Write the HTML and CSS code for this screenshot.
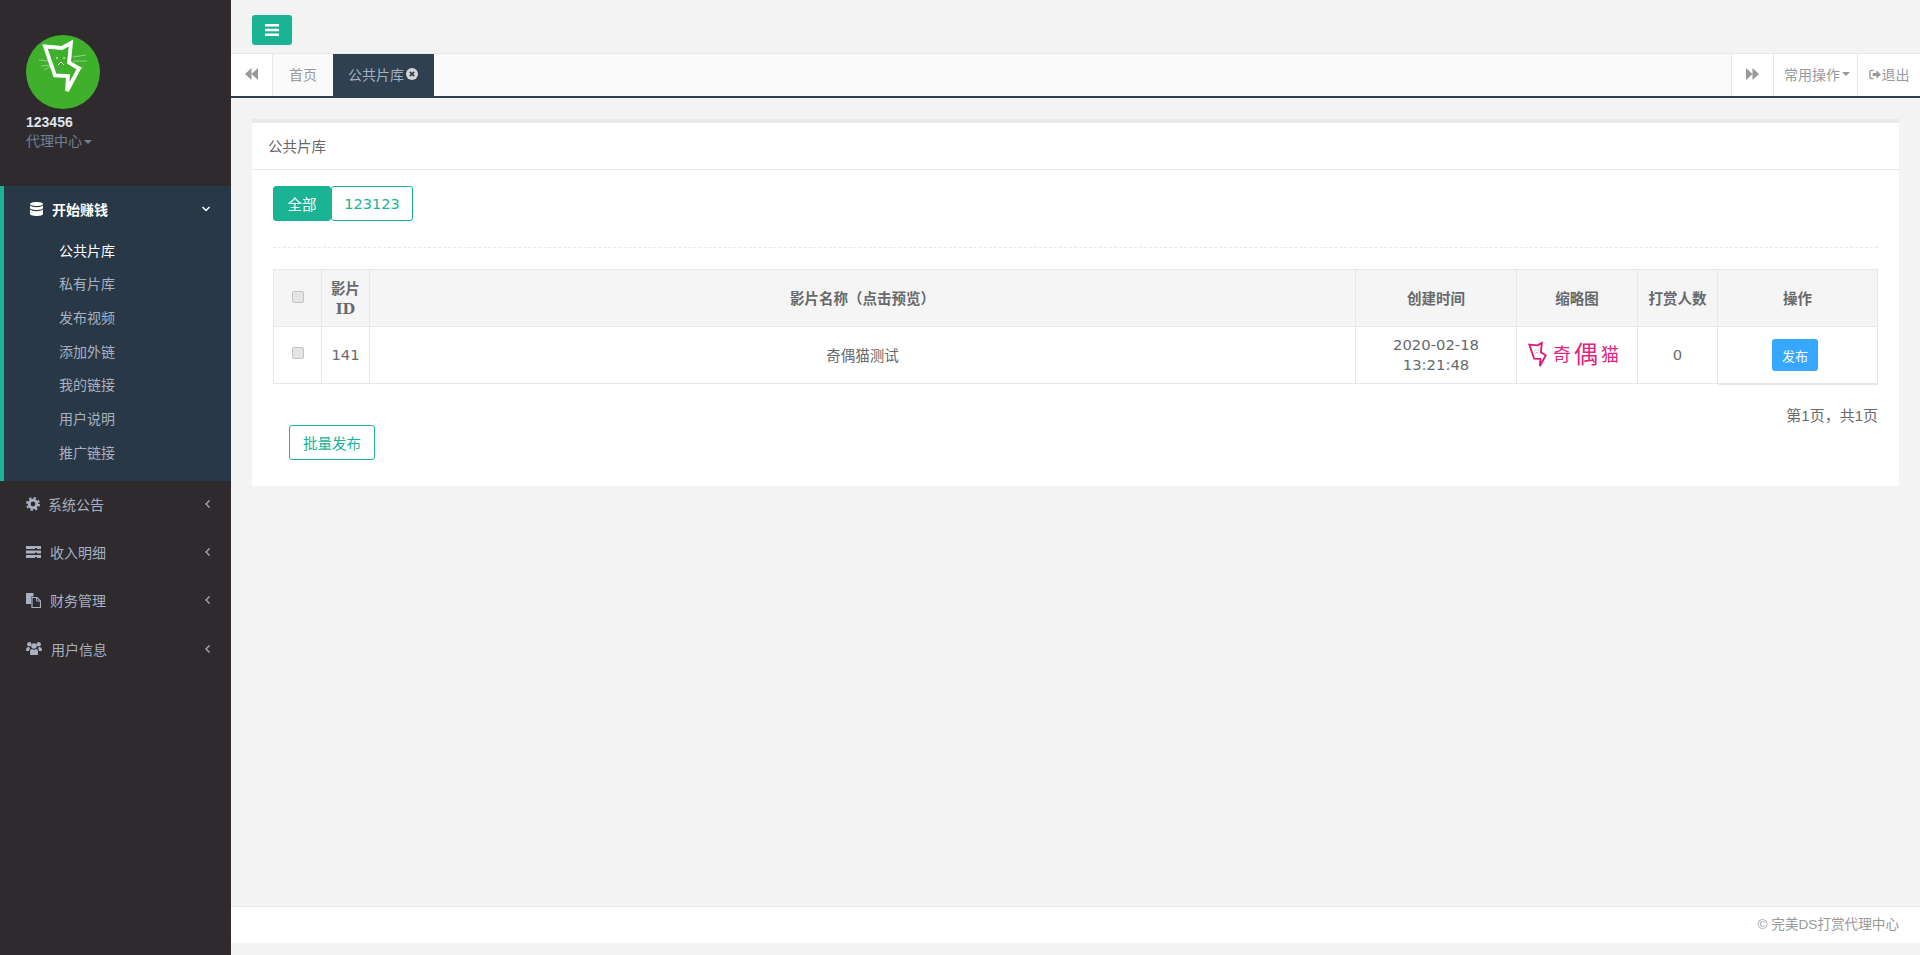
FILE: index.html
```html
<!DOCTYPE html>
<html lang="zh-CN">
<head>
<meta charset="utf-8">
<title>公共片库</title>
<link rel="stylesheet" href="styles.css">
</head>
<body>
<svg class="defs" width="0" height="0" aria-hidden="true">
  <symbol id="cat" viewBox="13 2 46 62">
    <path d="M19 11.500 36 13 45 8 43 27.500 53 33.500 41 56 42 41 29 40.500Z" fill="none" stroke="currentColor" stroke-width="3.800"/>
    <path d="M31 22v2M38 22v2M32 30l3-3 3 3" fill="none" stroke="currentColor" stroke-width="1"/>
  </symbol>
</svg>
<aside class="sidebar">
  <div class="profile">
    <svg class="avatar" viewBox="0 0 74 74">
      <circle cx="37" cy="37" r="37" fill="#3fb02c"/>
      <path d="M13 25l10 1M15 31l9-1M18 35l7-4M47 22l13-2M47 26l14 0M47 30l10 3" stroke="#cfeac8" stroke-width=".7" opacity=".8"/>
      <path d="M19 11.500 36 13 45 8 43 27.500 53 33.500 41 56 42 41 29 40.500Z" fill="none" stroke="#fff" stroke-width="3.800"/>
      <path d="M31 22v2M38 22v2M32 30l3-3 3 3" fill="none" stroke="#fff" stroke-width="1"/>
    </svg>
    <div class="uname">123456</div>
    <div class="urole">代理中心<i class="caret"></i></div>
  </div>
  <nav>
    <div class="group active">
      <div class="head head-active">
        <svg class="ic ic-db" viewBox="0 0 13 14"><path d="M6.500 0C10 0 13 .9 13 2s-3 2-6.500 2S0 3.100 0 2 3 0 6.500 0ZM0 3.600C1.200 4.700 4 5.200 6.500 5.200S11.800 4.700 13 3.600V6c0 1.100-3 2-6.500 2S0 7.100 0 6ZM0 7.600C1.200 8.700 4 9.200 6.500 9.200s5.300-.5 6.500-1.600V12c0 1.100-3 2-6.500 2S0 13.100 0 12Z" fill="currentColor"/></svg>
        <span class="label">开始赚钱</span>
        <svg class="chev chev-open" viewBox="0 0 10 10"><path d="M1.500 3 5 6.500 8.500 3" fill="none" stroke="currentColor" stroke-width="1.500"/></svg>
      </div>
      <ul class="sub">
        <li class="on">公共片库</li>
        <li>私有片库</li>
        <li>发布视频</li>
        <li>添加外链</li>
        <li>我的链接</li>
        <li>用户说明</li>
        <li>推广链接</li>
      </ul>
    </div>
    <div class="head">
      <svg class="ic ic-cog" viewBox="0 0 14 14"><circle cx="7" cy="7" r="3.800" fill="none" stroke="currentColor" stroke-width="2.800"/><circle cx="7" cy="7" r="6" fill="none" stroke="currentColor" stroke-width="2" stroke-dasharray="2.400 2.300"/></svg>
      <span class="label">系统公告</span>
      <svg class="chev" viewBox="0 0 10 10"><path d="M6.500 1.500 3 5l3.500 3.500" fill="none" stroke="currentColor" stroke-width="1.300"/></svg>
    </div>
    <div class="head">
      <svg class="ic ic-srv" viewBox="0 0 15 12"><path d="M0 0h15v3H11v-1H9v1H0ZM0 4.500h15v3H11v-1H9v1H0ZM0 9h15v3H11v-1H9v1H0Z" fill="currentColor"/></svg>
      <span class="label">收入明细</span>
      <svg class="chev" viewBox="0 0 10 10"><path d="M6.500 1.500 3 5l3.500 3.500" fill="none" stroke="currentColor" stroke-width="1.300"/></svg>
    </div>
    <div class="head">
      <svg class="ic ic-files" viewBox="0 0 15 15"><path d="M0 0h7.500v3.500H5V11H0Z" fill="currentColor"/><path d="M6 4.500h5l3.500 3.500v6.500H6Z" fill="none" stroke="currentColor" stroke-width="1.200"/><path d="M10.500 4.500V8h4" fill="none" stroke="currentColor" stroke-width="1"/></svg>
      <span class="label">财务管理</span>
      <svg class="chev" viewBox="0 0 10 10"><path d="M6.500 1.500 3 5l3.500 3.500" fill="none" stroke="currentColor" stroke-width="1.300"/></svg>
    </div>
    <div class="head">
      <svg class="ic ic-users" viewBox="0 0 16 13"><circle cx="3.300" cy="2.300" r="2.200" fill="currentColor"/><circle cx="12.700" cy="2.300" r="2.200" fill="currentColor"/><circle cx="8" cy="4" r="2.800" fill="currentColor"/><path d="M0 8c0-2 1-3 3-3l1 1.500c-.6.800-1 1.500-1 2.500H1C.3 9 0 8.600 0 8ZM16 8c0-2-1-3-3-3l-1 1.500c.6.800 1 1.500 1 2.500h2c.7 0 1-.4 1-1ZM4 9.500C4 7.800 5 7 6 7l2 1 2-1c1 0 2 .8 2 2.500V12c0 .6-.4 1-1 1H5c-.6 0-1-.4-1-1Z" fill="currentColor"/></svg>
      <span class="label">用户信息</span>
      <svg class="chev" viewBox="0 0 10 10"><path d="M6.500 1.500 3 5l3.500 3.500" fill="none" stroke="currentColor" stroke-width="1.300"/></svg>
    </div>
  </nav>
</aside>
<main class="main">
  <div class="topbar">
    <button class="toggle" type="button" aria-label="菜单">
      <svg viewBox="0 0 14 12" width="14" height="12"><path d="M0 0h14v2.500H0ZM0 4.700h14v2.500H0ZM0 9.400h14v2.500H0Z" fill="#fff"/></svg>
    </button>
  </div>
  <div class="tabs">
    <div class="tab-btn tab-arrow">
      <svg viewBox="0 0 13 12" width="13" height="12"><path d="M6.500 0v12L0 6ZM13 0v12L6.500 6Z" fill="currentColor"/></svg>
    </div>
    <div class="tab-link">首页</div>
    <div class="tab-link tab-current">公共片库<svg class="tab-x" viewBox="0 0 12 12" width="12" height="12"><circle cx="6" cy="6" r="6" fill="#d5d5d5"/><path d="M3.800 3.800l4.400 4.400M8.200 3.800 3.800 8.200" stroke="#2f4050" stroke-width="1.800"/></svg></div>
    <div class="tab-spacer"></div>
    <div class="tab-btn tab-arrow tab-arrow-right">
      <svg viewBox="0 0 13 12" width="13" height="12"><path d="M0 0v12l6.500-6ZM6.500 0v12L13 6Z" fill="currentColor"/></svg>
    </div>
    <div class="tab-btn tab-menu">常用操作<i class="caret"></i></div>
    <div class="tab-btn tab-exit">
      <svg viewBox="0 0 13 11" width="12" height="11"><path d="M5 1H3C1.800 1 1 1.800 1 3v5c0 1.200.8 2 2 2h2" fill="none" stroke="currentColor" stroke-width="1.500"/><path d="M4 3.800h4V1l5 4.500L8 10V7.200H4Z" fill="currentColor"/></svg>退出
    </div>
  </div>
  <section class="content">
    <div class="card">
      <div class="card-title">公共片库</div>
      <div class="card-body">
        <div class="filters">
          <a class="filter filter-on">全部</a><a class="filter filter-name">123123</a>
        </div>
        <div class="dash"></div>
        <table class="grid">
          <colgroup>
            <col class="c1"><col class="c2"><col class="c3"><col class="c4"><col class="c5"><col class="c6"><col class="c7">
          </colgroup>
          <thead>
            <tr>
              <th><span class="chk"></span></th>
              <th>影片<br>ID</th>
              <th>影片名称（点击预览）</th>
              <th>创建时间</th>
              <th>缩略图</th>
              <th>打赏人数</th>
              <th>操作</th>
            </tr>
          </thead>
          <tbody>
            <tr>
              <td><span class="chk"></span></td>
              <td>141</td>
              <td class="cjk">奇偶猫测试</td>
              <td>2020-02-18<br>13:21:48</td>
              <td>
                <div class="thumb">
                  <svg class="thumb-cat" width="23" height="30"><use href="#cat"/></svg>
                  <span class="t-small">奇</span><span class="t-big">偶</span><span class="t-small">猫</span>
                </div>
              </td>
              <td>0</td>
              <td class="ops"><button class="publish" type="button">发布</button></td>
            </tr>
          </tbody>
        </table>
        <div class="pager">第1页，共1页</div>
        <button class="batch" type="button">批量发布</button>
      </div>
    </div>
  </section>
  <footer class="footer">© 完美DS打赏代理中心</footer>
</main>
</body>
</html>
```
FILE: styles.css
```css
* { box-sizing: border-box; }
html, body { margin: 0; height: 100%; }
body {
  display: flex;
  height: 955px;
  overflow: hidden;
  background: #f3f3f4;
  color: #676a6c;
  font-family: "Liberation Sans", "Noto Sans CJK SC", sans-serif;
  font-size: 14px;
}
.defs { position: absolute; }
button { font-family: inherit; cursor: pointer; }

.sidebar { width: 231px; flex: none; background: #2f2a2e; color: #a7b1c2; }
.profile { height: 186px; padding: 35px 0 0 26px; }
.avatar { display: block; width: 74px; height: 74px; }
.uname { margin-top: 4px; font-size: 14px; line-height: 18px; font-weight: 700; color: #dfe4ed; }
.urole { margin-top: 1px; font-size: 14px; line-height: 19px; color: #6f8096; }
.caret {
  display: inline-block;
  margin-left: 2px;
  vertical-align: middle;
  border-top: 4px solid currentColor;
  border-left: 4px solid transparent;
  border-right: 4px solid transparent;
}
.group { background: #293846; border-left: 4px solid #1ab394; height: 295px; }
.head { display: flex; align-items: center; height: 48.3px; padding: 0 0 3px 26px; font-size: 14px; }
.head-active { height: 47px; padding: 0 0 2px 26px; color: #fff; font-weight: 600; }
.label { flex: none; }
.ic { flex: none; display: block; }
.ic-db { width: 13px; height: 14px; margin-right: 9px; }
.ic-cog { width: 14px; height: 14px; margin-right: 8px; }
.ic-srv { width: 15px; height: 12px; margin-right: 9px; }
.ic-files { width: 15px; height: 15px; margin-right: 9px; }
.ic-users { width: 16px; height: 13px; margin-right: 9px; }
.chev { width: 10px; height: 10px; margin-left: auto; margin-right: 18px; }
.chev-open { margin-right: 20px; }
.sub { margin: 0; padding: 1.5px 0 0; list-style: none; }
.sub li { height: 33.7px; line-height: 33.7px; padding-left: 55px; font-size: 14px; }
.sub .on { color: #fff; }

.main { flex: 1; min-width: 0; display: flex; flex-direction: column; }
.topbar { height: 53px; padding: 15px 0 0 21px; }
.toggle {
  display: flex;
  align-items: center;
  justify-content: center;
  width: 40px;
  height: 30px;
  padding: 0;
  border: 0;
  border-radius: 3px;
  background: #1ab394;
}
.tabs {
  display: flex;
  height: 45px;
  background: #fafafa;
  border-top: 1px solid #e7eaec;
  border-bottom: 2px solid #2f4050;
  color: #999;
  font-size: 14px;
}
.tab-btn { display: flex; align-items: center; justify-content: center; background: #fff; padding-bottom: 2px; }
.tab-arrow { width: 42px; border-right: 1px solid #e7e7e7; color: #999; }
.tab-arrow-right { width: 43px; border-left: 1px solid #e7e7e7; }
.tab-link { display: flex; align-items: center; padding: 0 16px 2px; width: 60px; }
.tab-current { width: 101px; padding-left: 15px; background: #2f4050; color: #a7b1c2; white-space: nowrap; }
.tab-x { margin-left: 2px; flex: none; }
.tab-spacer { flex: 1; }
.tab-menu { width: 84px; padding-left: 10px; justify-content: flex-start; border-right: 1px solid #e7e7e7; white-space: nowrap; }
.tab-exit { width: 62px; white-space: nowrap; gap: 1px; }

.content { padding: 21px 21px 0; }
.card { height: 367px; background: #fff; border-top: 4px solid #e7eaec; }
.card-title { height: 47px; line-height: 49px; padding-left: 16px; border-bottom: 1px solid #e7eaec; font-size: 14.500px; }
.card-body { padding: 16px 21px 0; }
.filters { display: flex; height: 35px; }
.filter {
  display: flex;
  align-items: center;
  justify-content: center;
  border: 1px solid #1ab394;
  border-radius: 3px;
  color: #1ab394;
  font-family: "DejaVu Sans", "Noto Sans CJK SC", sans-serif;
  font-size: 14.500px;
}
.filter-on { background: #1ab394; color: #fff; width: 58px; font-family: "Noto Sans CJK SC", sans-serif; }
.filter-name { width: 82px; }
.dash { margin-top: 26px; border-top: 1px dashed #e7eaec; }

.grid {
  width: 1605px;
  margin-top: 21px;
  table-layout: fixed;
  border-collapse: separate;
  border-spacing: 0;
  border-top: 1px solid #e7e7e7;
  border-left: 1px solid #e7e7e7;
  font-family: "DejaVu Sans", "Noto Sans CJK SC", sans-serif;
  font-size: 14.800px;
}
.c1 { width: 48px; } .c2 { width: 48px; } .c3 { width: 986px; } .c4 { width: 161px; }
.c5 { width: 121px; } .c6 { width: 80px; } .c7 { width: 160px; }
.grid th, .grid td {
  padding: 0;
  text-align: center;
  vertical-align: middle;
  border-right: 1px solid #e7e7e7;
  border-bottom: 1px solid #e7e7e7;
  line-height: 20px;
}
.grid th {
  height: 57px;
  padding-top: 1px;
  background: #f5f5f6;
  font-family: "DejaVu Serif", "Noto Sans CJK SC", serif;
  font-size: 14.500px;
  font-weight: 700;
}
.grid td { height: 57px; }
.grid .cjk { font-family: "Noto Sans CJK SC", sans-serif; font-size: 14.500px; }
.ops { box-shadow: 0 1px 0 #e7e7e7; }
.chk {
  display: block;
  width: 12px;
  height: 12px;
  margin: -4px auto 0;
  border: 1px solid #c2c2c2;
  border-radius: 2px;
  background: #e4e4e4;
}
.thumb { display: flex; align-items: center; padding-left: 9px; color: #e0247f; }
.thumb-cat { flex: none; color: #dc1a78; margin-right: 4px; }
.t-small { font-size: 18px; line-height: 20px; }
.t-big { font-size: 24px; line-height: 26px; margin: 0 3px 0 3px; }
.publish {
  width: 46px;
  height: 32px;
  margin-right: 5px;
  padding: 0;
  border: 0;
  border-radius: 3px;
  background: #36a8ff;
  color: #fff;
  font-size: 13px;
}
.pager { margin-top: 22px; line-height: 20px; text-align: right; font-size: 15px; }
.batch {
  display: block;
  width: 86px;
  height: 35px;
  margin: -1px 0 0 16px;
  padding: 0;
  border: 1px solid #1ab394;
  border-radius: 3px;
  background: #fff;
  color: #1ab394;
  font-size: 14.500px;
}
.footer {
  margin-top: auto;
  margin-bottom: 12px;
  height: 37px;
  line-height: 36px;
  padding-right: 21px;
  text-align: right;
  background: #fff;
  border-top: 1px solid #e7eaec;
  color: #999;
  font-size: 13.600px;
}
```
